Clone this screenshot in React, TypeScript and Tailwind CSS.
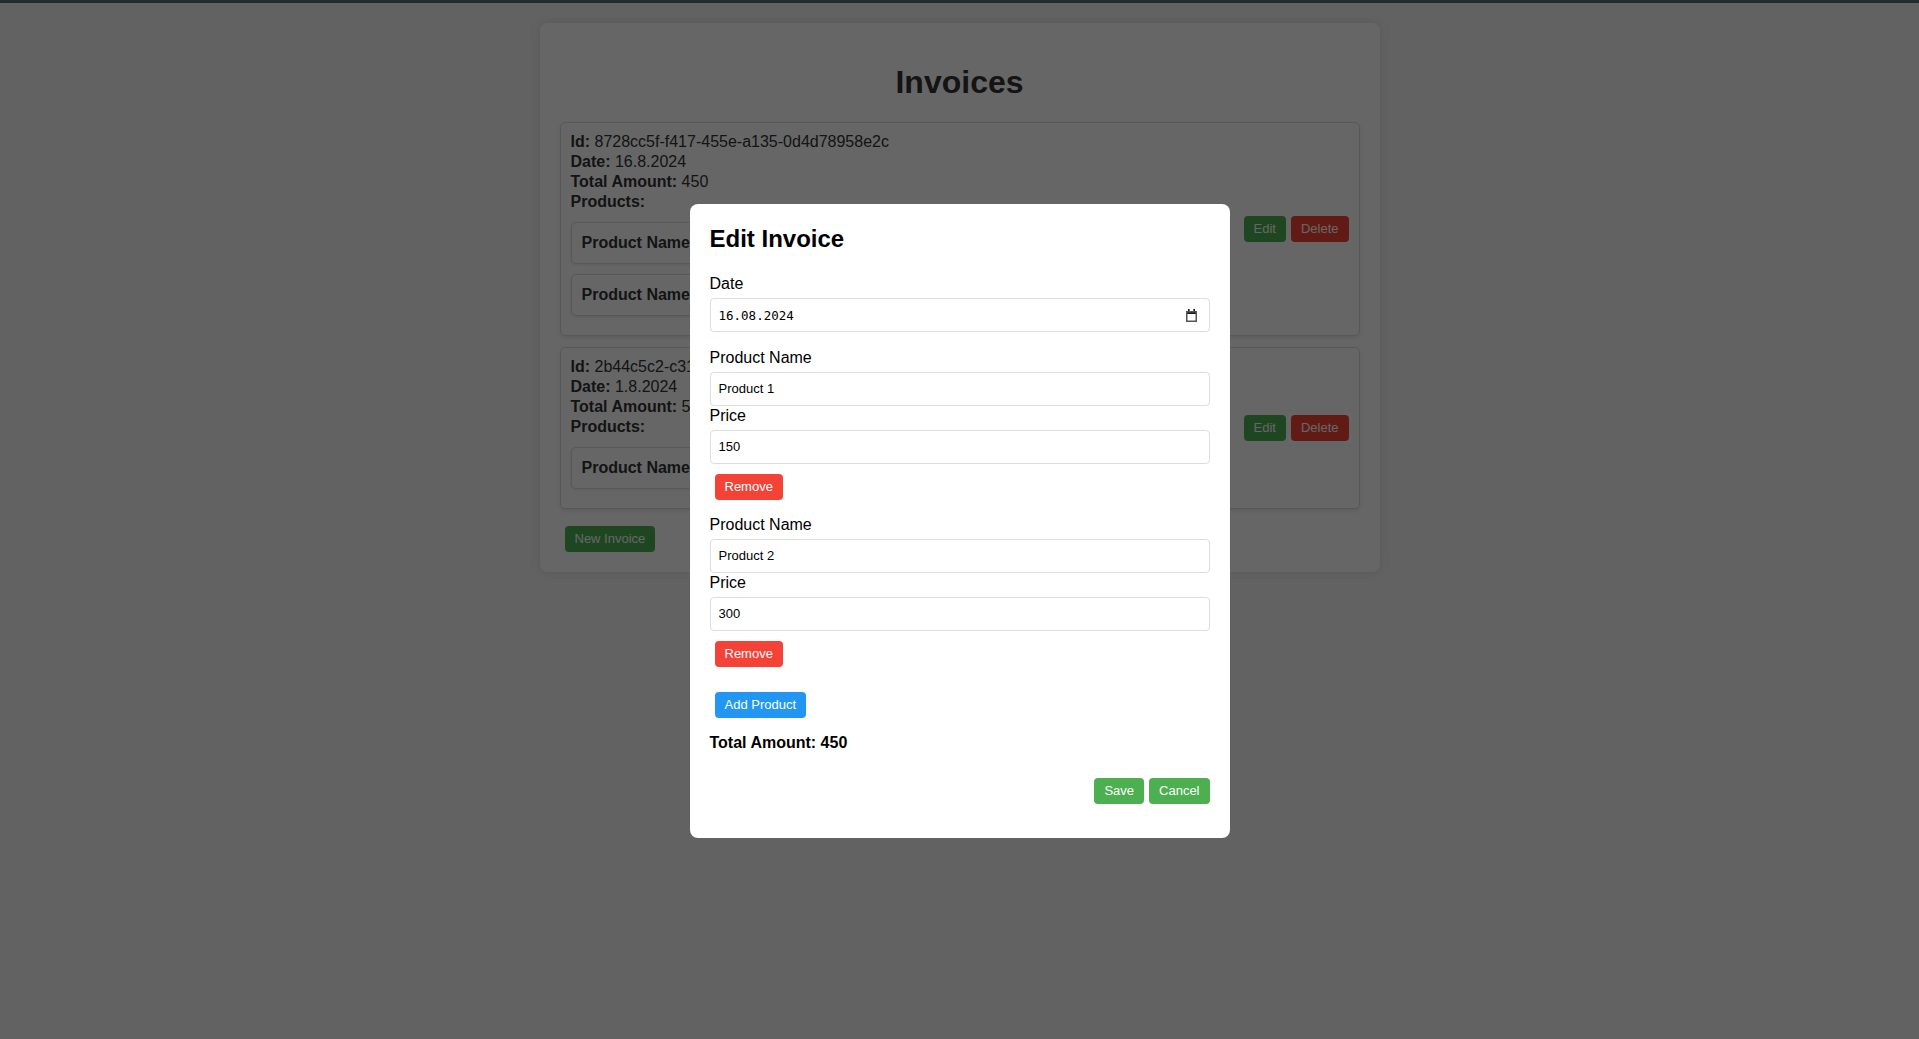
import React from "react";

type Product = { name: string; price: number };
type Invoice = { id: string; date: string; total: number; products: Product[] };

const invoices: Invoice[] = [
  {
    id: "8728cc5f-f417-455e-a135-0d4d78958e2c",
    date: "16.8.2024",
    total: 450,
    products: [
      { name: "Product 1", price: 150 },
      { name: "Product 2", price: 300 },
    ],
  },
  {
    id: "2b44c5c2-c31e-4b8a-9f0d-7a1e5c3b2d41",
    date: "1.8.2024",
    total: 500,
    products: [{ name: "Product 3", price: 500 }],
  },
];

const editing: Product[] = [
  { name: "Product 1", price: 150 },
  { name: "Product 2", price: 300 },
];

const btn = "ml-[5px] rounded-[4px] px-[10px] py-[5px] text-[13px] leading-4 text-white";

function CalendarIcon() {
  return (
    <svg width="11" height="13" viewBox="0 0 11 13" className="mr-[4px]">
      <rect x="2" y="0" width="1.6" height="2.5" fill="#1a1a1a" />
      <rect x="7.4" y="0" width="1.6" height="2.5" fill="#1a1a1a" />
      <rect x="0" y="2" width="11" height="3" fill="#1a1a1a" />
      <rect x="0.75" y="2.75" width="9.5" height="9.5" fill="none" stroke="#555" strokeWidth="1.5" />
    </svg>
  );
}

function InvoiceCard({ invoice }: { invoice: Invoice }) {
  return (
    <div className="mb-[11px] flex items-center justify-between rounded-[5px] border border-[#ddd] bg-white px-[10px] py-[9px] shadow-[0_2px_4px_rgba(0,0,0,0.1)]">
      <div className="leading-5">
        <div>
          <b>Id:</b> {invoice.id}
        </div>
        <div>
          <b>Date:</b> {invoice.date}
        </div>
        <div>
          <b>Total Amount:</b> {invoice.total}
        </div>
        <div>
          <b>Products:</b>
        </div>
        <div className="my-[10px] flex flex-col gap-[10px]">
          {invoice.products.map((p) => (
            <div
              key={p.name}
              className="rounded-[5px] border border-[#ddd] bg-white p-[10px] shadow-[0_1px_3px_rgba(0,0,0,0.1)]"
            >
              <b>Product Name:</b> {p.name}
            </div>
          ))}
        </div>
      </div>
      <div className="flex">
        <button className={`${btn} bg-[#4caf50]`}>Edit</button>
        <button className={`${btn} bg-[#f44336]`}>Delete</button>
      </div>
    </div>
  );
}

function Field({ label, value }: { label: string; value: string }) {
  return (
    <>
      <label className="mb-[5px] block leading-[19px]">{label}</label>
      <div className="flex h-[34px] items-center rounded-[4px] border border-[#ddd] px-[8px] text-[13px]">
        {value}
      </div>
    </>
  );
}

export default function App() {
  return (
    <div className="min-h-screen bg-[#f4f4f4] font-['Liberation_Sans',Arial,sans-serif] text-base text-[#333]">
      <div className="h-[3px] bg-[#546e7a]" />
      <div className="mx-auto mt-5 w-[840px] rounded-[8px] bg-white p-5 shadow-[0_0_10px_rgba(0,0,0,0.1)]">
        <h1 className="my-[21px] text-center text-[32px] leading-[37px] font-bold">Invoices</h1>
        {invoices.map((inv) => (
          <InvoiceCard key={inv.id} invoice={inv} />
        ))}
        <div className="mt-[17px]">
          <button className={`${btn} bg-[#4caf50]`}>New Invoice</button>
        </div>
      </div>

      <div className="fixed inset-0 flex items-center justify-center bg-black/60">
        <div className="mt-[3px] w-[540px] rounded-[8px] bg-white px-5 pt-5 pb-[34px] text-black">
          <h2 className="mb-5 text-2xl leading-[30px] font-bold">Edit Invoice</h2>
          <div className="mb-4">
            <label className="mb-[5px] block leading-[19px]">Date</label>
            <div className="flex h-[34px] items-center justify-between rounded-[4px] border border-[#ddd] px-[8px]">
              <span className="pt-[2px] font-['DejaVu_Sans_Mono',monospace] text-[12.5px]">16.08.2024</span>
              <CalendarIcon />
            </div>
          </div>
          {editing.map((p) => (
            <div key={p.name} className="mb-[15px]">
              <Field label="Product Name" value={p.name} />
              <Field label="Price" value={String(p.price)} />
              <button className={`${btn} mt-[10px] bg-[#f44336]`}>Remove</button>
            </div>
          ))}
          <button className={`${btn} mt-[10px] bg-[#2196f3]`}>Add Product</button>
          <div className="mt-[15px] leading-[19px] font-bold">Total Amount: 450</div>
          <div className="mt-[26px] flex justify-end">
            <button className={`${btn} bg-[#4caf50]`}>Save</button>
            <button className={`${btn} bg-[#4caf50]`}>Cancel</button>
          </div>
        </div>
      </div>
    </div>
  );
}
